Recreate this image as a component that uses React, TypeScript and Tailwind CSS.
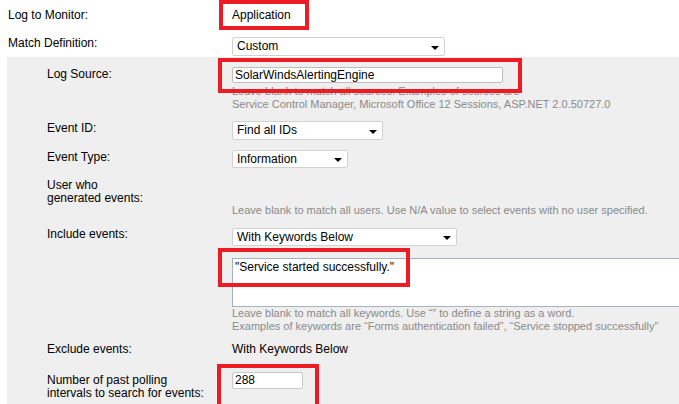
import React from "react";

const Arrow = () => (
  <span className="absolute right-[5px] top-1/2 -translate-y-[1px] border-x-[4px] border-x-transparent border-t-[4px] border-t-black" />
);

const Select = ({ text, className }: { text: string; className: string }) => (
  <div
    className={`relative box-border rounded-[2px] border border-[#d2d2d2] bg-white pl-[4px] text-[12px] ${className}`}
  >
    {text}
    <Arrow />
  </div>
);

const Hint = ({ children }: { children: React.ReactNode }) => (
  <div className="text-[11px] leading-[13px] text-[#8a8a8a]">{children}</div>
);

const Label = ({ children }: { children: React.ReactNode }) => (
  <div className="w-[225px] shrink-0 pl-[40px] text-[12px] leading-[13px]">{children}</div>
);

const RedBox = ({ className }: { className: string }) => (
  <div className={`pointer-events-none absolute box-border border-[4px] border-[#ed1c24] ${className}`} />
);

export default function App() {
  return (
    <div className="relative h-[404px] w-[679px] overflow-hidden bg-white font-['Liberation_Sans',Arial,sans-serif] text-[12px] text-black">
      <div className="flex h-[30px] items-center">
        <div className="w-[232px] shrink-0 pl-[8px]">Log to Monitor:</div>
        <div>Application</div>
      </div>
      <div className="flex h-[27px] pt-[7px]">
        <div className="w-[232px] shrink-0 pl-[8px] leading-[13px]">Match Definition:</div>
        <Select text="Custom" className="h-[19px] w-[213px] leading-[17px]" />
      </div>

      <div className="ml-[7px] h-[347px] bg-[#efefef]">
        <div className="flex pt-[10px]">
          <Label>
            <div className="pt-[1px]">Log Source:</div>
          </Label>
          <div className="box-border h-[16px] w-[271px] rounded-[2px] border border-[#bdbdbd] bg-white pl-[2px] leading-[14px]">
            SolarWindsAlertingEngine
          </div>
        </div>
        <div className="flex pt-[2px]">
          <div className="w-[225px] shrink-0" />
          <div>
            <Hint>Leave blank to match all sources. Examples of sources are</Hint>
            <Hint>Service Control Manager, Microsoft Office 12 Sessions, ASP.NET 2.0.50727.0</Hint>
          </div>
        </div>

        <div className="flex pt-[10px]">
          <Label>
            <div className="pt-[1px]">Event ID:</div>
          </Label>
          <Select text="Find all IDs" className="h-[19px] w-[151px] leading-[17px]" />
        </div>
        <div className="flex pt-[10px]">
          <Label>
            <div className="pt-[1px]">Event Type:</div>
          </Label>
          <Select text="Information" className="h-[18px] w-[116px] leading-[16px]" />
        </div>
        <div className="flex pt-[11px]">
          <Label>
            User who
            <br />
            generated events:
          </Label>
          <div className="pt-[25px]">
            <Hint>Leave blank to match all users. Use N/A value to select events with no user specified.</Hint>
          </div>
        </div>
        <div className="flex pt-[11px]">
          <Label>Include events:</Label>
          <Select text="With Keywords Below" className="h-[18px] w-[225px] leading-[16px]" />
        </div>
        <div className="flex pt-[12px]">
          <div className="w-[225px] shrink-0" />
          <div className="box-border h-[49px] flex-1 border border-r-0 border-[#a7b2c0] bg-white pl-[2px] pt-[1px] leading-[14px]">
            "Service started successfully."
          </div>
        </div>
        <div className="flex">
          <div className="w-[225px] shrink-0" />
          <div>
            <Hint>Leave blank to match all keywords. Use “” to define a string as a word.</Hint>
            <Hint>Examples of keywords are “Forms authentication failed”, “Service stopped successfully”</Hint>
          </div>
        </div>
        <div className="flex pt-[9px] leading-[14px]">
          <Label>
            <div className="leading-[14px]">Exclude events:</div>
          </Label>
          <div>With Keywords Below</div>
        </div>
        <div className="flex pt-[16px]">
          <Label>
            <div className="pt-[2px]">
              Number of past polling
              <br />
              intervals to search for events:
            </div>
          </Label>
          <div className="box-border h-[17px] w-[71px] rounded-[2px] border border-[#c8c8c8] bg-white pl-[2px] leading-[15px]">
            288
          </div>
        </div>
      </div>

      <RedBox className="left-[219px] top-0 h-[30px] w-[90px]" />
      <RedBox className="left-[218px] top-[58px] h-[35px] w-[304px]" />
      <RedBox className="left-[218px] top-[248px] h-[39px] w-[192px]" />
      <RedBox className="left-[217px] top-[364px] h-[44px] w-[102px]" />
    </div>
  );
}
